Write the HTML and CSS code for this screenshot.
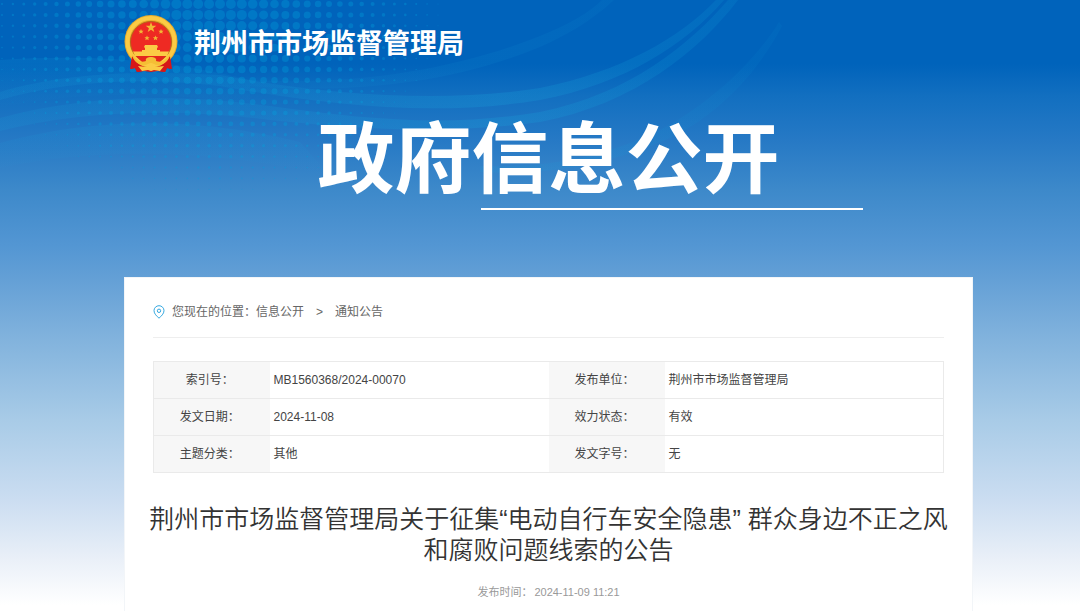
FILE: index.html
```
<!DOCTYPE html>
<html lang="zh-CN">
<head>
	<meta charset="utf-8">
	<meta name="viewport" content="width=device-width, initial-scale=1">
	<title>荆州市市场监督管理局 - 政府信息公开</title>
	<link rel="stylesheet" href="styles.css">
</head>
<body>

<svg class="bg" width="800" height="230" viewBox="0 0 800 230" aria-hidden="true">
	<defs>
		<linearGradient id="fade" gradientUnits="userSpaceOnUse" x1="0" y1="0" x2="800" y2="0">
			<stop offset="0" stop-color="#19a5dc" stop-opacity=".14"/>
			<stop offset=".3" stop-color="#19a5dc" stop-opacity=".14"/>
			<stop offset=".62" stop-color="#19a5dc" stop-opacity=".24"/>
			<stop offset="1" stop-color="#0a96d4" stop-opacity=".16"/>
		</linearGradient>
		<linearGradient id="soft" x1="0" y1="0" x2="0" y2="1">
			<stop offset="0" stop-color="#19a5dc" stop-opacity=".14"/>
			<stop offset="1" stop-color="#19a5dc" stop-opacity="0"/>
		</linearGradient>
	</defs>
	<g id="dots" fill="#00a0dc" fill-opacity=".34"></g>
	<path d="M0 60C90 54 170 60 250 80V104C170 92 80 90 0 108Z" fill="url(#soft)"/>
	<path d="M0 143C100 116 200 118 300 142L330 176C220 150 100 146 0 168Z" fill="url(#soft)"/>
	<g fill="url(#fade)">
		<path d="M0 92C60 74 130 70 220 75C320 94 440 104 540 88C620 72 680 38 716 0H724C686 44 625 84 540 100C430 118 320 104 220 86C140 76 60 82 0 100Z"/>
		<path d="M0 118C90 94 180 94 270 106C370 120 450 127 540 112C630 94 690 44 728 0H738C700 50 635 104 540 122C440 136 350 128 270 120C180 108 80 110 0 131Z"/>
		<path d="M250 80C360 86 460 68 540 36C570 24 590 12 602 0H614C590 22 565 36 540 47C450 84 350 94 250 86Z" fill-opacity=".4"/>
		<path d="M480 166C560 168 610 154 660 130C710 104 756 60 779 22L782 26C760 68 724 112 670 138C610 164 550 176 480 172Z" fill-opacity=".5"/>
	</g>
</svg>

<header class="top">
	<svg class="emblem" viewBox="0 0 54 59" role="img" aria-label="国徽">
		<path d="M8 41L6 55L11 54L13 58L20 57L27 58L34 57L41 58L43 54L48 55L46 41Z" fill="#d71718"/>
		<ellipse cx="27" cy="27.500" rx="26.500" ry="26.500" fill="#e9ac2c"/>
		<ellipse cx="27" cy="27.500" rx="23.500" ry="23.500" fill="none" stroke="#fbcb45" stroke-width="4"/>
		<circle cx="27" cy="28" r="20.500" fill="#ee2a23" stroke="#b8641a" stroke-width="1"/>
		<g fill="#f2b935">
			<path d="M27 8l1.300 3.800h4l-3.200 2.400 1.200 3.800-3.300-2.300-3.300 2.300 1.200-3.800-3.200-2.400h4z"/>
			<path d="M17 15l.8 1.700 1.800.1-1.400 1.200.5 1.800-1.700-1-1.700 1 .5-1.800-1.400-1.200 1.800-.1z"/>
			<path d="M37 15l.8 1.700 1.800.1-1.400 1.200.5 1.800-1.700-1-1.700 1 .5-1.800-1.400-1.200 1.800-.1z"/>
			<path d="M23 21.500l.8 1.700 1.800.1-1.400 1.200.5 1.800-1.700-1-1.700 1 .5-1.800-1.400-1.200 1.800-.1z"/>
			<path d="M31.500 21.500l.8 1.700 1.800.1-1.400 1.200.5 1.800-1.700-1-1.700 1 .5-1.800-1.400-1.200 1.800-.1z"/>
		</g>
		<path d="M21 31h12l1 2-1 1v2h3v2H18v-2h3v-2l-1-1z" fill="#fbcb45"/>
		<path d="M9 37.500h36l-2 4.500H11z" fill="#fbcb45"/>
		<path d="M12 42h30l-6 6-9-1-9 1z" fill="#e5261d"/>
		<path d="M8 42l-1 13 4-1 2 4 7-1 1-4c-6-2-10-6-13-11zM46 42l1 13-4-1-2 4-7-1-1-4c6-2 10-6 13-11z" fill="#d71718"/>
		<path d="M8 40c4 7 9 9 14 7-1-3 2-4 5-4s6 1 5 4c5 2 10 0 14-7-1 8-8 12-14 11-2-1-3-2-5-2s-3 1-5 2c-6 1-13-3-14-11z" fill="#f5be35"/>
		<path d="M14 52l8 1c2-3 8-3 10 0l8-1-4 5-6-1-3 1-3-1-6 1z" fill="#fbcb45"/>
	</svg>
	<p class="site">荆州市市场监督管理局</p>
</header>

<div class="banner">
	<h1>政府信息公开</h1>
	<div class="line"></div>
</div>

<main class="card">
	<nav class="crumbs">
		<svg class="pin" viewBox="0 0 12 14" aria-hidden="true">
			<path d="M6 13.200C3.800 11.200 1 8.700 1 5.700a5 5 0 0 1 10 0c0 3-2.800 5.500-5 7.500z"/>
			<circle cx="6" cy="5.800" r="1.700"/>
		</svg>
		<span>您现在的位置：</span>
		<a href="#">信息公开</a>
		<span class="sep">&gt;</span>
		<a href="#">通知公告</a>
	</nav>

	<table class="info">
		<tr>
			<th scope="row">索引号：</th><td>MB1560368/2024-00070</td>
			<th scope="row">发布单位：</th><td>荆州市市场监督管理局</td>
		</tr>
		<tr>
			<th scope="row">发文日期：</th><td>2024-11-08</td>
			<th scope="row">效力状态：</th><td>有效</td>
		</tr>
		<tr>
			<th scope="row">主题分类：</th><td>其他</td>
			<th scope="row">发文字号：</th><td>无</td>
		</tr>
	</table>

	<h2>荆州市市场监督管理局关于征集“电动自行车安全隐患” 群众身边不正之风和腐败问题线索的公告</h2>
	<p class="time"><span>发布时间：</span><time datetime="2024-11-09T11:21">2024-11-09 11:21</time></p>
</main>

<script>
	// halftone dots, biggest at the top just right of the emblem
	let dots = document.getElementById('dots');
	for (let row = 0; row < 18; row++) {
		for (let col = 0; col < 42; col++) {
			let x = 2 + col * 10.9, y = 4 + row * 10.9;
			let dist = Math.hypot((x - 210) / 250, (y - 4) / 205);
			let r = 5.8 * (1 - dist);
			if (r < 0.4) continue;
			let c = document.createElementNS('http://www.w3.org/2000/svg', 'circle');
			c.setAttribute('cx', x.toFixed(1));
			c.setAttribute('cy', y.toFixed(1));
			c.setAttribute('r', Math.min(r, 5).toFixed(1));
			dots.appendChild(c);
		}
	}
</script>

</body>
</html>
```
FILE: styles.css
```
*{box-sizing: border-box; margin: 0; padding: 0;}

body{
	padding: 0 107px 0 124px;
	font-family: "Liberation Sans", "Noto Sans CJK SC", sans-serif;
	font-size: 12px;
	color: #444;
	background: #fff linear-gradient(#0063bb 0, #0063bb 64px, #126fc0 96px, #2679c5 140px, #3d89ca 190px, #5396d3 245px, #64a0d6 280px, #82b3dd 340px, #a8cbe7 420px, #cbddf1 500px, #eaf0f8 560px, #fff 605px) no-repeat;
}

.bg{
	position: absolute;
	top: 0;
	left: 0;
	z-index: -1;
}

.top{
	display: flex;
	align-items: center;
	gap: 16px;
	padding-top: 14px;
}
.emblem{width: 54px; height: 59px;}
.site{
	padding-top: 2px;
	font-size: 27px;
	line-height: 57px;
	font-weight: bold;
	color: #fff;
}

.banner{padding-top: 42px; color: #fff;}
h1{
	font-size: 77px;
	line-height: 90px;
	text-align: center;
}
.line{
	width: 45%;
	height: 2px;
	margin: 3px 0 0 42%;
	background: #fff;
}

.card{
	margin-top: 67px;
	padding: 16px 28px;
	background: #fff;
	border: 1px solid #f2f5f8;
	border-bottom: 0;
}

.crumbs{
	display: flex;
	align-items: center;
	height: 44px;
	border-bottom: 1px solid #eee;
	color: #666;
	line-height: 20px;
	padding-bottom: 8px;
}
.crumbs a{color: #666; text-decoration: none;}
.crumbs a:hover{color: #1e9be0;}
.pin{
	width: 12px;
	height: 14px;
	margin-right: 7px;
	fill: none;
	stroke: #35a8e0;
}
.sep{margin: 0 12px;}

.info{
	width: 100%;
	margin-top: 23px;
	table-layout: fixed;
	border-collapse: collapse;
	border: 1px solid #eaeaea;
}
.info tr{border-bottom: 1px solid #eaeaea;}
.info th, .info td{height: 37px; line-height: 20px;}
.info th{
	width: 116px;
	padding-right: 4px;
	background: #f7f7f7;
	font-weight: normal;
	text-align: center;
}
.info td{padding-left: 4px;}

h2{
	margin: 31px -8px 0;
	font-family: "Liberation Sans", "Noto Sans CJK SC DemiLight", "Noto Sans CJK SC", sans-serif;
	font-size: 25px;
	line-height: 31px;
	font-weight: 350;
	text-align: center;
	color: #333;
}

.time{
	display: flex;
	justify-content: center;
	gap: 2px;
	margin-top: 16px;
	font-size: 11px;
	line-height: 20px;
	color: #999;
}
```
